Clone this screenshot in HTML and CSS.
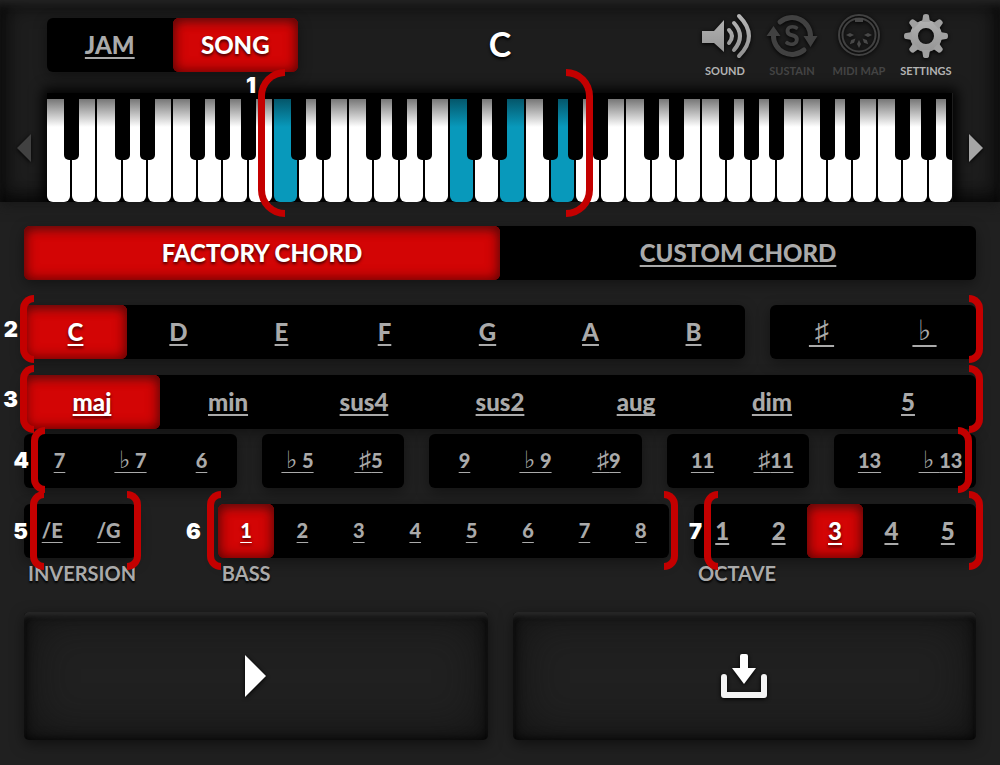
FILE: index.html
```
<!DOCTYPE html>
<html lang="en">
<head>
    <meta charset="UTF-8">
    <meta name="viewport" content="width=device-width, initial-scale=1.0">
    <title>Chord Pad Editor</title>
    <link rel="stylesheet" href="styles.css">
</head>
<body>
    <header class="header">
        <div class="toolbar">
            <div class="group mode">
                <button type="button">JAM</button>
                <button type="button" class="active plain">SONG</button>
            </div>
            <h1>C</h1>
            <nav class="tools">
                <button type="button">
                    <svg viewBox="0 0 54 50" aria-hidden="true">
                        <defs>
                            <linearGradient id="metal" x1="0" y1="0" x2="0" y2="50" gradientUnits="userSpaceOnUse">
                                <stop offset="0" stop-color="#b8b8b8"/>
                                <stop offset="1" stop-color="#8c8c8c"/>
                            </linearGradient>
                        </defs>
                        <path d="M4 19h12L26 8v32L16 31H4z" fill="url(#metal)"/>
                        <g fill="none" stroke="url(#metal)" stroke-width="4" stroke-linecap="round">
                            <path d="M31 18Q37 24 31 31"/>
                            <path d="M36 11Q48 24 36 38"/>
                            <path d="M41 4Q61 24 41 44"/>
                        </g>
                    </svg>
                    <span>SOUND</span>
                </button>
                <button type="button" class="dim">
                    <svg viewBox="0 0 54 50" aria-hidden="true">
                        <g fill="none" stroke="#414141" stroke-width="5" stroke-linecap="round">
                            <path d="M15 10A18.500 18.500 0 0 1 45.500 25"/>
                            <path d="M39 38A18.500 18.500 0 0 1 8.500 23"/>
                        </g>
                        <path d="M38.500 24h14l-7 11zM1.500 24h14l-7-10z" fill="#414141"/>
                        <text x="27" y="34" class="sustain-mark">S</text>
                    </svg>
                    <span>SUSTAIN</span>
                </button>
                <button type="button" class="dim">
                    <svg viewBox="0 0 54 50" aria-hidden="true">
                        <g fill="none" stroke="#414141">
                            <circle cx="27" cy="23" r="20" stroke-width="2"/>
                            <circle cx="27" cy="23" r="16.500" stroke-width="2"/>
                        </g>
                        <g fill="#484848">
                            <path d="M23 6h8v4h-8z"/>
                            <path id="pin" d="M14 23l4-2 4 2-4 2z"/>
                            <use href="#pin" transform="rotate(-45 27 23)"/>
                            <use href="#pin" transform="rotate(-90 27 23)"/>
                            <use href="#pin" transform="rotate(-135 27 23)"/>
                            <use href="#pin" transform="rotate(180 27 23)"/>
                        </g>
                    </svg>
                    <span>MIDI MAP</span>
                </button>
                <button type="button">
                    <svg viewBox="0 0 54 50" aria-hidden="true">
                        <circle cx="27" cy="24" r="12" fill="none" stroke="url(#metal)" stroke-width="8"/>
                        <g fill="#a0a0a0">
                            <path id="tooth" d="M23 10l1-6q0-2 3-2t3 2l1 6z"/>
                            <use href="#tooth" transform="rotate(45 27 24)"/>
                            <use href="#tooth" transform="rotate(90 27 24)"/>
                            <use href="#tooth" transform="rotate(135 27 24)"/>
                            <use href="#tooth" transform="rotate(180 27 24)"/>
                            <use href="#tooth" transform="rotate(225 27 24)"/>
                            <use href="#tooth" transform="rotate(270 27 24)"/>
                            <use href="#tooth" transform="rotate(315 27 24)"/>
                        </g>
                    </svg>
                    <span>SETTINGS</span>
                </button>
            </nav>
        </div>

        <div class="piano">
            <button type="button" class="scroll" aria-label="Scroll left">
                <svg viewBox="0 0 14 28"><path d="M14 0v28L0 14z" fill="#414141"/></svg>
            </button>
            <!-- "sharp" keys carry the black key on their right edge -->
            <div class="keys">
                <button type="button" class="key sharp" aria-label="A1"></button>
                <button type="button" class="key" aria-label="B1"></button>
                <button type="button" class="key sharp" aria-label="C2"></button>
                <button type="button" class="key sharp" aria-label="D2"></button>
                <button type="button" class="key" aria-label="E2"></button>
                <button type="button" class="key sharp" aria-label="F2"></button>
                <button type="button" class="key sharp" aria-label="G2"></button>
                <button type="button" class="key sharp" aria-label="A2"></button>
                <button type="button" class="key" aria-label="B2"></button>
                <button type="button" class="key sharp on" aria-label="C3"></button>
                <button type="button" class="key sharp" aria-label="D3"></button>
                <button type="button" class="key" aria-label="E3"></button>
                <button type="button" class="key sharp" aria-label="F3"></button>
                <button type="button" class="key sharp" aria-label="G3"></button>
                <button type="button" class="key sharp" aria-label="A3"></button>
                <button type="button" class="key" aria-label="B3"></button>
                <button type="button" class="key sharp on" aria-label="C4"></button>
                <button type="button" class="key sharp" aria-label="D4"></button>
                <button type="button" class="key on" aria-label="E4"></button>
                <button type="button" class="key sharp" aria-label="F4"></button>
                <button type="button" class="key sharp on" aria-label="G4"></button>
                <button type="button" class="key sharp" aria-label="A4"></button>
                <button type="button" class="key" aria-label="B4"></button>
                <button type="button" class="key sharp" aria-label="C5"></button>
                <button type="button" class="key sharp" aria-label="D5"></button>
                <button type="button" class="key" aria-label="E5"></button>
                <button type="button" class="key sharp" aria-label="F5"></button>
                <button type="button" class="key sharp" aria-label="G5"></button>
                <button type="button" class="key sharp" aria-label="A5"></button>
                <button type="button" class="key" aria-label="B5"></button>
                <button type="button" class="key sharp" aria-label="C6"></button>
                <button type="button" class="key sharp" aria-label="D6"></button>
                <button type="button" class="key" aria-label="E6"></button>
                <button type="button" class="key sharp" aria-label="F6"></button>
                <button type="button" class="key sharp" aria-label="G6"></button>
                <button type="button" class="key sharp" aria-label="A6"></button>
            </div>
            <button type="button" class="scroll" aria-label="Scroll right">
                <svg viewBox="0 0 14 28"><path d="M0 0v28l14-14z" fill="#a6a6a6"/></svg>
            </button>
            <div class="callout callout-keys"><b>1</b></div>
        </div>
    </header>

    <main class="editor">
        <div class="row row-source">
            <div class="group">
                <button type="button" class="active plain">FACTORY CHORD</button>
                <button type="button">CUSTOM CHORD</button>
            </div>
        </div>

        <div class="row row-root">
            <div class="group span-7">
                <button type="button" class="active">C</button>
                <button type="button">D</button>
                <button type="button">E</button>
                <button type="button">F</button>
                <button type="button">G</button>
                <button type="button">A</button>
                <button type="button">B</button>
            </div>
            <div class="group span-2">
                <button type="button" class="accidental">&thinsp;♯&thinsp;</button>
                <button type="button" class="accidental">&thinsp;♭&thinsp;</button>
            </div>
            <div class="callout callout-root"><b>2</b></div>
        </div>

        <div class="row row-quality">
            <div class="group">
                <button type="button" class="active">maj</button>
                <button type="button">min</button>
                <button type="button">sus4</button>
                <button type="button">sus2</button>
                <button type="button">aug</button>
                <button type="button">dim</button>
                <button type="button">5</button>
            </div>
            <div class="callout callout-root"><b>3</b></div>
        </div>

        <div class="row row-extension">
            <div class="group small span-3">
                <button type="button">7</button>
                <button type="button"><i>&thinsp;♭&thinsp;</i>7</button>
                <button type="button">6</button>
            </div>
            <div class="group small span-2">
                <button type="button"><i>&thinsp;♭&thinsp;</i>5</button>
                <button type="button"><i>&thinsp;♯</i>5</button>
            </div>
            <div class="group small span-3">
                <button type="button">9</button>
                <button type="button"><i>&thinsp;♭&thinsp;</i>9</button>
                <button type="button"><i>&thinsp;♯</i>9</button>
            </div>
            <div class="group small span-2">
                <button type="button">11</button>
                <button type="button"><i>&thinsp;♯</i>11</button>
            </div>
            <div class="group small span-2">
                <button type="button">13</button>
                <button type="button"><i>&thinsp;♭&thinsp;</i>13</button>
            </div>
            <div class="callout callout-extension"><b>4</b></div>
        </div>

        <div class="row row-voicing">
            <section class="voicing inversion span-2">
                <div class="group small">
                    <button type="button">/E</button>
                    <button type="button">/G</button>
                </div>
                <h2>INVERSION</h2>
                <div class="callout callout-inversion"><b>5</b></div>
            </section>
            <section class="voicing span-8">
                <div class="group small">
                    <button type="button" class="active">1</button>
                    <button type="button">2</button>
                    <button type="button">3</button>
                    <button type="button">4</button>
                    <button type="button">5</button>
                    <button type="button">6</button>
                    <button type="button">7</button>
                    <button type="button">8</button>
                </div>
                <h2>BASS</h2>
                <div class="callout callout-bass"><b>6</b></div>
            </section>
            <section class="voicing span-5">
                <div class="group">
                    <button type="button">1</button>
                    <button type="button">2</button>
                    <button type="button" class="active">3</button>
                    <button type="button">4</button>
                    <button type="button">5</button>
                </div>
                <h2>OCTAVE</h2>
                <div class="callout callout-octave"><b>7</b></div>
            </section>
        </div>

        <div class="row row-actions">
            <button type="button" class="pad" aria-label="Play">
                <svg class="play" viewBox="0 0 21 42"><path d="M0 0v42l21-21z" fill="#fff"/></svg>
            </button>
            <button type="button" class="pad" aria-label="Save">
                <svg class="save" viewBox="0 0 48 44">
                    <path d="M4 23v18h40V23" fill="none" stroke="#f4f4f4" stroke-width="6" stroke-linecap="round" stroke-linejoin="round"/>
                    <path d="M20 2q0-2 2-2h4q2 0 2 2v12h8L24 30 12 14h8z" fill="#fff"/>
                </svg>
            </button>
        </div>
    </main>
</body>
</html>
```
FILE: styles.css
```
*,
*::before,
*::after {
    box-sizing: border-box;
}
body {
    margin: 0;
    min-height: 100vh;
    background-color: #202020;
    color: #aaa;
    font-family: Lato, "Open Sans", sans-serif;
    font-weight: 900;
}
button {
    margin: 0;
    padding: 0;
    border: none;
    background: none;
    color: inherit;
    font: inherit;
    cursor: pointer;
}
svg {
    display: block;
    overflow: visible;
    filter: drop-shadow(0 1px 2px #000);
}

/* header */
.header {
    background-color: #1d1d1d;
    box-shadow: inset 0 8px 8px -4px #262626, inset 0 -6px 16px -4px #080808, inset 0 0 24px #040404, 0 2px 12px #161616;
}
.toolbar {
    display: grid;
    grid-template-columns: 1fr auto 1fr;
    align-items: start;
    height: 93px;
    padding: 12px 47px 0;
}
.toolbar h1 {
    margin: 5px 0 0;
    color: #fff;
    font-size: 34px;
    line-height: 54px;
    text-shadow: 0 2px 3px #000;
}
.mode {
    width: 251px;
    margin-top: 6px;
}
.tools {
    display: flex;
    justify-content: flex-end;
    gap: 13px;
}
.tools button {
    width: 54px;
    font-size: 11px;
    font-weight: 700;
    line-height: 18px;
    white-space: nowrap;
    color: #b4b4b4;
}
.tools svg {
    width: 54px;
    height: 50px;
}
.tools span {
    display: flex;
    justify-content: center;
}
.tools .dim {
    color: #444;
}
.sustain-mark {
    fill: #414141;
    font-size: 28px;
    font-weight: 900;
    text-anchor: middle;
}

/* keyboard */
.piano {
    position: relative;
    display: flex;
}
.scroll {
    width: 48px;
    display: flex;
    justify-content: center;
    align-items: center;
}
.scroll:first-child {
    width: 47px;
}
.scroll svg {
    width: 14px;
    height: 28px;
}
.keys {
    flex: 1;
    display: flex;
    height: 109px;
    padding-top: 6px;
    background-color: #000;
    clip-path: inset(0);
}
.piano::before {
    content: "";
    position: absolute;
    inset: 0 47px;
    box-shadow: 0 0 12px 4px #000;
    clip-path: inset(-20px -20px 0);
}
.key {
    position: relative;
    flex: 1;
    margin: 0 1px;
    border-radius: 0 0 6px 6px;
    background: linear-gradient(#777, #fff 28px);
}
.key:first-child {
    margin-left: 0;
}
.key:last-child {
    margin-right: 0;
}
.key.on {
    background: linear-gradient(#04566a, #0899bb 28px);
}
.key.sharp::after {
    content: "";
    position: absolute;
    z-index: 1;
    top: 0;
    right: -9px;
    width: 15px;
    height: 61px;
    border-radius: 0 0 5px 5px;
    background-color: #000;
}

/* rows of chord options */
.editor {
    padding: 24px;
}
.row {
    position: relative;
    display: flex;
    gap: 25px;
}
.row-source {
    margin-bottom: 25px;
}
.row-root {
    margin-bottom: 16px;
}
.row-quality {
    margin-bottom: 5px;
}
.row-extension {
    margin-bottom: 16px;
}
.group {
    flex: 1 1 0;
    display: flex;
    height: 54px;
    border-radius: 6px;
    background-color: #000;
    box-shadow: 0 4px 14px rgba(0, 0, 0, 0.4);
    font-size: 24px;
}
.group button {
    flex: 1 1 0;
    min-width: 0;
    padding-bottom: 2px;
    border-radius: 6px;
    white-space: nowrap;
    text-decoration: underline;
    text-decoration-thickness: 2px;
    text-underline-offset: 3px;
    text-decoration-skip-ink: none;
}
.group .plain {
    text-decoration: none;
}
.group .active {
    color: #fff;
    background-color: #d30505;
    box-shadow: inset 0 0 14px #500, inset 0 4px 8px #8f1414;
    text-shadow: 0 2px 3px #400;
}
.group.small {
    font-size: 20px;
}
.group.small button {
    text-decoration-thickness: 1px;
    text-underline-offset: 4px;
}
.group .accidental,
.group i {
    font-family: "DejaVu Sans", sans-serif;
    font-style: normal;
    font-weight: 200;
}
.group i {
    font-size: 24px;
    line-height: 20px;
}
.group .accidental {
    font-size: 28px;
    line-height: 28px;
    text-underline-offset: 5px;
}
.span-2 {
    flex: 2 1 0;
}
.span-3 {
    flex: 3 1 0;
}
.span-5 {
    flex: 5 1 0;
}
.span-7 {
    flex: 7 1 0;
}
.span-8 {
    flex: 8 1 0;
}
.voicing {
    position: relative;
    min-width: 0;
}
.inversion {
    margin-right: 56px;
}
.voicing h2 {
    margin: 0 4px;
    font-size: 20px;
    line-height: 30px;
    text-shadow: 0 2px 2px #000;
}

/* play and save pads */
.row-actions {
    margin-top: 24px;
}
.pad {
    flex: 1;
    display: flex;
    justify-content: center;
    align-items: center;
    height: 128px;
    border-radius: 5px;
    background-color: #202020;
    box-shadow: inset 0 6px 4px -2px #282828, inset 0 0 12px #000, inset 0 0 48px #101010, 0 4px 14px rgba(0, 0, 0, 0.5);
}
.play {
    width: 21px;
    height: 42px;
}
.save {
    width: 48px;
    height: 44px;
}

/* numbered brackets laid over the controls */
.callout {
    position: absolute;
    pointer-events: none;
    z-index: 2;
}
.callout::before,
.callout::after {
    content: "";
    position: absolute;
    top: 0;
    bottom: 0;
    width: 14px;
    border: 7px solid #c40000;
}
.callout::before {
    left: 0;
    border-right: none;
    border-radius: 14px 0 0 14px;
}
.callout::after {
    right: 0;
    border-left: none;
    border-radius: 0 14px 14px 0;
}
.callout b {
    position: absolute;
    right: 100%;
    top: 50%;
    margin: -12px 2px 0 0;
    color: #fff;
    font-family: Inter, "Liberation Sans", sans-serif;
    font-size: 22px;
    font-weight: 900;
    line-height: 24px;
}
.callout-keys {
    top: -24px;
    bottom: -15px;
    left: 25.8%;
    right: 40.7%;
}
.callout-keys::before,
.callout-keys::after {
    width: 27px;
}
.callout-keys::before {
    border-radius: 27px 0 0 27px;
}
.callout-keys::after {
    border-radius: 0 27px 27px 0;
}
.callout-keys b {
    top: 16px;
}
.callout-root {
    inset: -10px -7px -4px -4px;
}
.callout-extension {
    inset: -7px 4px -5px 7px;
}
.callout-inversion {
    inset: -13px -4px 18px 6px;
}
.callout-bass {
    inset: -13px -9px 18px -11px;
}
.callout-bass b {
    margin-right: 6px;
}
.callout-octave {
    inset: -13px -7px 18px 10px;
}
```
